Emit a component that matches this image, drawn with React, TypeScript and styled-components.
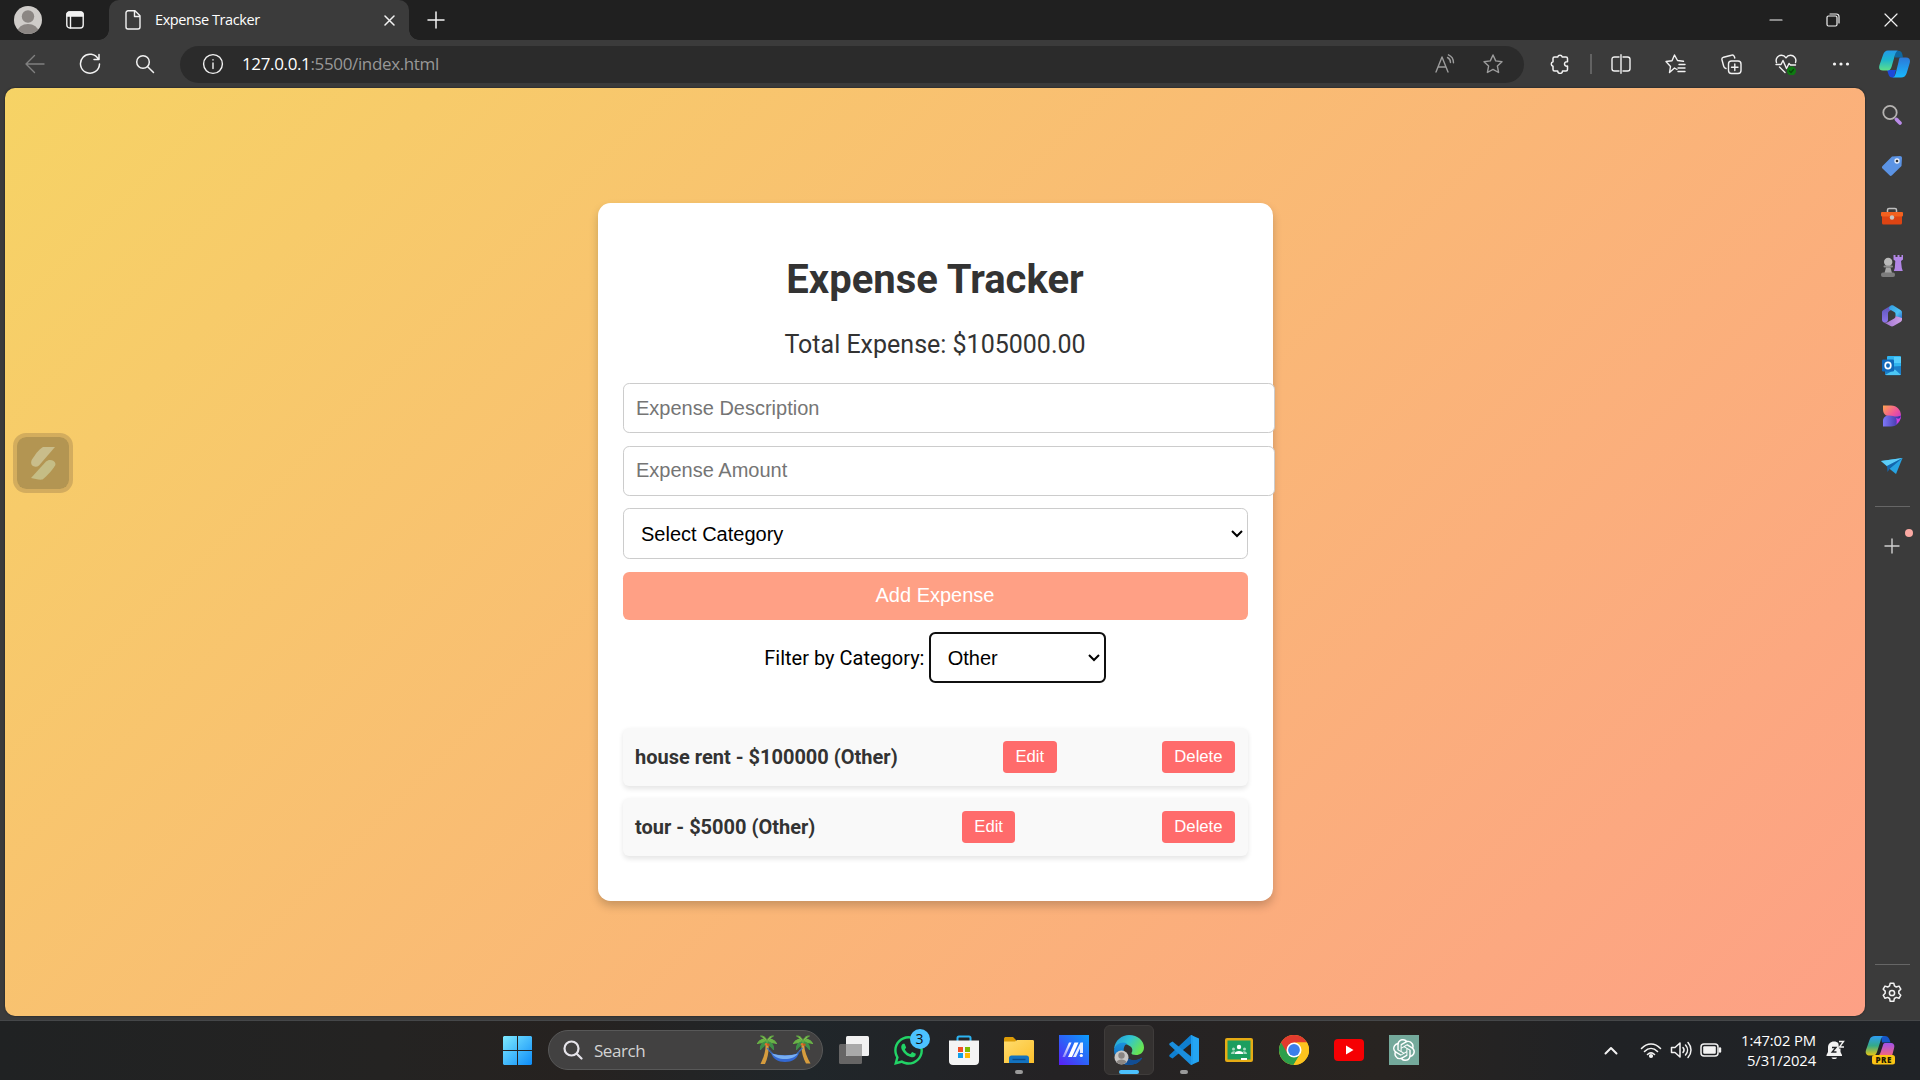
import React from "react";
import styled, { createGlobalStyle } from "styled-components";
import { SiOpenai } from "react-icons/si";
import { FaWhatsapp } from "react-icons/fa";

const uiFont = `"Segoe UI", "Open Sans", "Noto Sans", sans-serif`;

const GlobalStyle = createGlobalStyle`
  html, body { margin: 0; padding: 0; overflow: hidden; background: #3b3b3b; }
`;

/* ---------- Layout ---------- */

const Desktop = styled.div`
  width: 1920px;
  height: 1080px;
  display: flex;
  flex-direction: column;
  background: #3b3b3b;
  font-family: ${uiFont};
  overflow: hidden;
`;

const Slot = styled.div<{ $w?: number; $h?: number }>`
  flex: none;
  display: flex;
  align-items: center;
  justify-content: center;
  width: ${(p) => (p.$w ? `${p.$w}px` : "auto")};
  height: ${(p) => (p.$h ? `${p.$h}px` : "100%")};
  svg { display: block; }
`;

const Spacer = styled.div`
  flex: 1;
`;

/* ---------- Title bar ---------- */

const TitleBar = styled.header`
  flex: none;
  height: 40px;
  display: flex;
  background: #202020;
`;

const TitleLeft = styled.div`
  width: 109px;
  display: flex;
  padding-left: 5px;
  box-sizing: border-box;
`;

const WindowButtons = styled.div`
  display: flex;
  height: 39px;
  padding-right: 1px;
`;

const Tab = styled.div`
  position: relative;
  width: 300px;
  height: 40px;
  box-sizing: border-box;
  display: flex;
  align-items: center;
  padding: 0 10px 0 15px;
  border-radius: 10px 10px 0 0;
  background: #3b3b3b;
  &::before,
  &::after {
    content: "";
    position: absolute;
    bottom: 0;
    width: 10px;
    height: 10px;
  }
  &::before {
    left: -10px;
    background: radial-gradient(circle at 0 0, transparent 9.5px, #3b3b3b 10px);
  }
  &::after {
    right: -10px;
    background: radial-gradient(circle at 100% 0, transparent 9.5px, #3b3b3b 10px);
  }
`;

const TabTitle = styled.span`
  flex: 1;
  margin-left: 13px;
  font-size: 14.5px;
  letter-spacing: -0.42px;
  line-height: 20px;
  color: #fff;
`;

/* ---------- Toolbar ---------- */

const Toolbar = styled.div`
  flex: none;
  height: 48px;
  display: flex;
  align-items: center;
  padding-left: 7px;
`;

const AddressBar = styled.div`
  width: 1344px;
  height: 37px;
  margin: 0 18px 0 8px;
  display: flex;
  align-items: center;
  box-sizing: border-box;
  padding: 0 7px 0 12px;
  border-radius: 19px;
  background: #2b2b2b;
`;

const Url = styled.span`
  margin-left: 9px;
  padding-bottom: 2px;
  font-size: 17px;
  letter-spacing: -0.36px;
  color: #989898;
  b { font-weight: 400; color: #fff; }
`;

const ToolDivider = styled.div`
  width: 2px;
  height: 20px;
  margin: 0 1px 0 12px;
  background: #626262;
`;

/* ---------- Body ---------- */

const Body = styled.div`
  flex: none;
  height: 932px;
  display: flex;
  padding-left: 5px;
`;

const Viewport = styled.main`
  position: relative;
  width: 1860px;
  height: 928px;
  display: flex;
  align-items: center;
  justify-content: center;
  border-radius: 10px;
  background: linear-gradient(135deg, #f6d365 0%, #fda085 100%);
  box-shadow: 0 0 2px rgba(0, 0, 0, 0.6);
`;

const FloatingWidget = styled.div`
  position: absolute;
  left: 8px;
  top: 345px;
  width: 60px;
  height: 60px;
  box-sizing: border-box;
  border: 4px solid rgba(144, 116, 72, 0.35);
  border-radius: 13px;
  background: #b39552;
  background-clip: padding-box;
  display: flex;
  align-items: center;
  justify-content: center;
`;

const Card = styled.section`
  zoom: 1.25;
  width: 500px;
  padding: 20px;
  border-radius: 10px;
  background: #fff;
  box-shadow: 0 4px 8px rgba(0, 0, 0, 0.2);
  font-family: Roboto, sans-serif;
  font-size: 16px;
  text-align: center;
`;

const Heading = styled.h1`
  margin: 22.2px 0 21.2px;
  font-size: 32px;
  font-weight: 700;
  color: #333;
`;

const Total = styled.div`
  margin-bottom: 19.5px;
  font-size: 20px;
  color: #333;
`;

const Form = styled.form`
  display: flex;
  flex-direction: column;
  gap: 10px;
`;

const control = `
  box-sizing: content-box;
  margin: 0;
  padding: 10px;
  border: 1px solid #ccc;
  border-radius: 5px;
  background: #fff;
  font-family: "Liberation Sans", Arial, sans-serif;
  font-size: 16px;
`;

const Field = styled.input`
  ${control}
  width: 100%;
  &::placeholder { color: #757575; }
`;

const Select = styled.select<{ $focused?: boolean }>`
  ${control}
  box-sizing: border-box;
  height: 40.8px;
  color: #000;
  ${(p) => p.$focused && `width: 141px; border: 2px solid #101010; padding: 9px 8.6px 9px 9px;`}
`;

const AddButton = styled.button`
  padding: 10px;
  height: 38.4px;
  border: 0;
  border-radius: 5px;
  background: #ffa085;
  color: #fff;
  font-family: "Liberation Sans", Arial, sans-serif;
  font-size: 16px;
`;

const Filter = styled.div`
  display: flex;
  align-items: center;
  justify-content: center;
  gap: 4px;
  margin: 10px 0 20px;
`;

const List = styled.ul`
  list-style: none;
  margin: 36px 0 16px;
  padding: 0;
  display: flex;
  flex-direction: column;
  gap: 10px;
`;

const Item = styled.li`
  display: flex;
  align-items: center;
  justify-content: space-between;
  box-sizing: border-box;
  height: 46px;
  padding: 0 10px;
  border-radius: 5px;
  background: #f9f9f9;
  box-shadow: 0 2px 4px rgba(0, 0, 0, 0.1);
  font-weight: 700;
  color: #333;
`;

const ItemButton = styled.button`
  height: 25.6px;
  padding: 0 10px;
  border: 0;
  border-radius: 3px;
  background: #ff6b6b;
  color: #fff;
  font-family: "Liberation Sans", Arial, sans-serif;
  font-size: 13.333px;
`;

/* ---------- Sidebar ---------- */

const Sidebar = styled.aside`
  width: 54px;
  padding-right: 1px;
  display: flex;
  flex-direction: column;
  align-items: center;
`;

const SideLine = styled.div`
  width: 35px;
  height: 1px;
  background: #666;
`;

const AddSlot = styled.div`
  position: relative;
  width: 54px;
  height: 78px;
  display: flex;
  align-items: center;
  justify-content: center;
`;

const Dot = styled.span`
  position: absolute;
  left: 40px;
  top: 22px;
  width: 8px;
  height: 8px;
  border-radius: 50%;
  background: #fba9a3;
`;

/* ---------- Taskbar ---------- */

const Taskbar = styled.footer`
  flex: none;
  height: 60px;
  box-sizing: border-box;
  border-top: 1px solid #454749;
  display: flex;
  align-items: center;
  padding: 0 0 1px 490px;
  background: linear-gradient(90deg, #202223 0%, #242322 20%, #262220 30%, #20262a 42%, #242224 55%, #282421 72%, #202225 84%, #202327 100%);
`;

const SearchBox = styled.div`
  width: 275px;
  height: 40px;
  margin: 0 3px;
  box-sizing: border-box;
  display: flex;
  align-items: center;
  padding: 0 8px 0 14px;
  border: 1px solid #585858;
  border-radius: 20px;
  background: #424141;
  font-size: 17px;
  color: #d3d3d3;
  span { flex: 1; margin-left: 11px; letter-spacing: -0.45px; }
`;

const AppButton = styled.div<{ $active?: boolean }>`
  position: relative;
  flex: none;
  width: 50px;
  height: 50px;
  margin: 0 2.5px;
  box-sizing: border-box;
  display: flex;
  align-items: center;
  justify-content: center;
  border-radius: 6px;
  border: 1px solid ${(p) => (p.$active ? "#3f3c3b" : "transparent")};
  background: ${(p) => (p.$active ? "#343130" : "transparent")};
`;

const Indicator = styled.span<{ $active?: boolean }>`
  position: absolute;
  bottom: 0;
  left: 50%;
  transform: translateX(-50%);
  width: ${(p) => (p.$active ? 20 : 8)}px;
  height: 4px;
  border-radius: 2px;
  background: ${(p) => (p.$active ? "#4cc2ff" : "#9a9a9a")};
`;

const Badge = styled.span`
  position: absolute;
  left: 25px;
  top: 3px;
  width: 20px;
  height: 20px;
  border-radius: 50%;
  background: #4cc2ff;
  color: #111;
  font-size: 14px;
  line-height: 20px;
  text-align: center;
`;

const Clock = styled.div`
  width: 84px;
  margin-left: 6px;
  padding-bottom: 1px;
  text-align: right;
  font-size: 14.8px;
  letter-spacing: -0.12px;
  line-height: 20px;
  color: #fff;
  white-space: nowrap;
`;

/* ---------- Icons ---------- */

type LineProps = { w?: number; h?: number; color?: string; sw?: number; children: React.ReactNode };
const Line = ({ w = 20, h = w, color = "#f2f2f2", sw = 1.4, children }: LineProps) => (
  <svg width={w} height={h} viewBox={`0 0 ${w} ${h}`} fill="none" stroke={color} strokeWidth={sw} strokeLinecap="round" strokeLinejoin="round">
    {children}
  </svg>
);

const Avatar = () => (
  <svg width="28" height="28" viewBox="0 0 28 28">
    <clipPath id="av"><circle cx="14" cy="14" r="14" /></clipPath>
    <g clipPath="url(#av)">
      <rect width="28" height="28" fill="#cfccc9" />
      <circle cx="14" cy="10.5" r="6.2" fill="#8b8683" />
      <ellipse cx="14" cy="26" rx="10.5" ry="8" fill="#8b8683" />
    </g>
  </svg>
);

const star = "M10 1l2.700 5.900 6.300.8-4.600 4.400 1.200 6.400L10 15.400l-5.600 3.100 1.200-6.400L1 7.700l6.300-.8z";

const ToolCopilot = () => (
  <svg width="31" height="28" viewBox="0 0 31 28">
    <defs>
      <linearGradient id="cpa" x1="0" y1="0" x2="0" y2="1"><stop stopColor="#2498e8" /><stop offset=".45" stopColor="#1cb4cf" /><stop offset="1" stopColor="#5ee089" /></linearGradient>
      <linearGradient id="cpb" x1="0" y1="0" x2="0" y2="1"><stop stopColor="#2c78d8" /><stop offset="1" stopColor="#18b8fd" /></linearGradient>
    </defs>
    <path d="M15 1h5c2.500 0 3.200 2 4 6.500h-8z" fill="#0f679f" />
    <path d="M8 20h9l-2 7.500h-2c-3 0-3.400-3-5-7.500z" fill="#1d49d8" />
    <path d="M9 .5h11c-2.500 0-3.500 2-4.200 5L12.500 17c-.8 2.500-2 3.500-4 3.500H4c-3.500 0-4.500-2-3.500-5.500L4 5C5 2 6.500.5 9 .5z" fill="url(#cpa)" />
    <path d="M21.500 7.500H27c3.500 0 4.500 2 3.700 5.500l-3 10c-1 3-2.700 4.500-5.700 4.500h-9c2.200 0 3.100-2 3.800-4.500l2.700-11c.6-2.500.6-4.500 2-4.500z" fill="url(#cpb)" />
  </svg>
);

const TrayCopilot = () => (
  <svg width="32" height="32" viewBox="0 0 32 32">
    <defs>
      <linearGradient id="ta" x1="0" y1="0" x2="0" y2="1"><stop stopColor="#2e9df4" /><stop offset=".5" stopColor="#34a987" /><stop offset="1" stopColor="#e8c613" /></linearGradient>
      <linearGradient id="tb" x1="0" y1="0" x2="0" y2="1"><stop stopColor="#a052ea" /><stop offset="1" stopColor="#f7657b" /></linearGradient>
    </defs>
    <path d="M16 2h4c3.500 0 4.500 3 5.500 6.500H17z" fill="#1456c8" />
    <path d="M10 2h9c-2 0-3 2-3.500 5L12 18c-.8 2.500-2 3.500-4 3.500H5c-3.500 0-5-2-4-5.500L4.500 6C5.500 3 7 2 10 2z" fill="url(#ta)" />
    <path d="M20 9h5c4 0 5 2 4 5.500L27 22H12c2 0 3-2 3.700-4l2-6c.5-2 1-3 2.300-3z" fill="url(#tb)" />
    <rect x="7" y="21" width="23" height="9.500" rx="2.500" fill="#fcc414" />
    <text x="18.700" y="28.700" fontFamily="Open Sans, sans-serif" fontSize="8" fontWeight="800" textAnchor="middle" fill="#241a00" letterSpacing=".5">PRE</text>
  </svg>
);

const SideIcons = [
  <svg width="22" height="22" viewBox="0 0 22 22">
    <circle cx="9" cy="8.500" r="6.700" fill="none" stroke="#b5b3b1" strokeWidth="1.800" />
    <path d="M15.500 15.500l3.500 3.500" stroke="#b98be8" strokeWidth="3.800" strokeLinecap="round" />
  </svg>,
  <svg width="22" height="22" viewBox="0 0 22 22">
    <path d="M11 1.500l8-.5c1.200 0 2 .8 2 2l-.5 8L11 20.300c-.9.8-1.700.8-2.500 0L1.500 13.500c-.8-.8-.8-1.600 0-2.500z" fill="#5b93e4" />
    <circle cx="16" cy="6" r="2" fill="#333" stroke="#e8eefb" strokeWidth="1.300" />
  </svg>,
  <svg width="22" height="18" viewBox="0 0 22 18">
    <path d="M6.500 5V3c0-1 .5-1.500 1.500-1.500h6c1 0 1.500.5 1.500 1.500v2" fill="none" stroke="#bfbfbf" strokeWidth="1.500" />
    <rect x="1" y="8" width="20" height="9.500" rx="1.500" fill="#dd4413" />
    <rect x="0" y="5" width="22" height="4.500" rx="1" fill="#f2611f" />
    <circle cx="11" cy="10.500" r="2.200" fill="#c9c6c4" />
  </svg>,
  <svg width="22" height="24" viewBox="0 0 22 24">
    <path d="M12.500 1h2v2h2V1h2v2h2V1h1.500v4.500l-2 1.500.8 7 1 3h-9l1-3 .5-7-1.800-1.500z" fill="#b286e6" />
    <circle cx="7.200" cy="8" r="4.200" fill="#b9b9b9" />
    <rect x="2.500" y="11.500" width="9.500" height="2" rx="1" fill="#8d8d8d" />
    <path d="M5 13.500h4.500l1.500 5.500H3.500z" fill="#a6a6a6" />
    <rect x="0" y="18.500" width="14" height="4.500" rx="2" fill="#7c7c7c" />
  </svg>,
  <svg width="20" height="22" viewBox="0 0 20 22">
    <defs>
      <linearGradient id="m1" x1="0" y1="0" x2="0" y2="1"><stop stopColor="#5a54b8" /><stop offset="1" stopColor="#8d74ea" /></linearGradient>
      <linearGradient id="m2" x1="0" y1="0" x2="1" y2="1"><stop stopColor="#2f9ae0" /><stop offset=".6" stopColor="#4dc2f4" /><stop offset="1" stopColor="#2a63c4" /></linearGradient>
      <linearGradient id="m3" x1="0" y1="0" x2="1" y2="0"><stop stopColor="#9a6fd0" /><stop offset="1" stopColor="#cfa0e6" /></linearGradient>
    </defs>
    <path d="M9 .6L1.500 5C.6 5.500 0 6.300 0 7.300v7.500c0 1 .6 1.900 1.500 2.400 2 1.100 4.500-.2 4.500-2.400V8.500c0-1 .5-2 1.500-2.500L12 3z" fill="url(#m1)" />
    <path d="M9 .6c.8-.5 1.600-.5 2.400 0L18.500 5c.9.500 1.500 1.300 1.500 2.300v7.200l-6.500-3.500V9c0-1-.3-1.600-1.200-2.100L7 4C7 2.500 7.500 1.500 9 .6z" fill="url(#m2)" />
    <path d="M1.500 17.200c2 .8 3.500.3 5-.5l5.700-3.200c.9-.5 1.300-1.100 1.300-2.500L20 13v1.500c0 1-.6 1.900-1.500 2.400l-7 4.200c-.9.500-2.100.5-3 0z" fill="url(#m3)" />
  </svg>,
  <svg width="20" height="20" viewBox="0 0 20 20">
    <rect x="5" y="0" width="14" height="13" rx="1" fill="#2fb4f0" />
    <rect x="12" y="1" width="7" height="6" fill="#54cdfb" />
    <path d="M3 11l16-1v8c0 .8-.4 1.200-1.200 1.200H4.200C3.400 19.200 3 18.800 3 18z" fill="#1b7fc9" />
    <path d="M3 19l10-5.500 6 5.500z" fill="#4cc7f5" />
    <rect x="0" y="3.500" width="12" height="12" rx="1.200" fill="#1068b9" />
    <ellipse cx="6" cy="9.500" rx="2.800" ry="3.200" fill="none" stroke="#fff" strokeWidth="1.700" />
  </svg>,
  <svg width="20" height="22" viewBox="0 0 20 22">
    <defs>
      <linearGradient id="da" x1="0" y1="0" x2="1" y2="1"><stop stopColor="#ffa44f" /><stop offset=".5" stopColor="#f0559a" /><stop offset="1" stopColor="#a92fe0" /></linearGradient>
      <linearGradient id="db" x1="0" y1="0" x2="1" y2="0"><stop stopColor="#7d77f7" /><stop offset="1" stopColor="#3a2c9c" /></linearGradient>
    </defs>
    <path d="M1 .5h8c6 0 10 4.500 10 10 0 4-2 7-5 9V13L4 10.500C2 9 1 7 1 4.500z" fill="url(#da)" />
    <path d="M1 21.500V16c0-3.500 2.500-5.500 6-5.500 4.500 0 7 2.500 12 0-.5 6.500-4 11-10 11z" fill="url(#db)" />
    <path d="M19 10.500c-1 4-3 3.500-5 2.500 1 2.500 1 5 0 6.500 3-2 5-5 5-9z" fill="#cf3fe0" />
  </svg>,
  <svg width="22" height="18" viewBox="0 0 22 18">
    <path d="M0 4L21.500 1 15 17l-5-4z" fill="#27a3e2" />
    <path d="M0 4L21.500 1 6 9z" fill="#5dcdf8" />
    <path d="M6 9L21.500 1 9 11.500 6.500 15z" fill="#1466ac" />
  </svg>,
];

const fronds = [
  "M0 0C-3-3.500-7-2.500-9.500 2-6 .5-3 1 0 2z",
  "M0 0c-4 .5-7 3.500-6.500 8C-4.500 5-2 3.500 1 2z",
  "M0 0c3-3.500 7-2.500 9.500 2C6 .5 3 1 0 2z",
  "M0 0c4 .5 7 3.500 6.500 8C4.500 5 2 3.500-1 2z",
];

const PalmArt = () => (
  <svg width="58" height="32" viewBox="0 0 58 32">
    <path d="M9.500 9l3 .5c.5 7-.5 14-3.500 20.500H4.500C8 23 10 16 9.500 9zM48 9.500l-2.500 0c-.5 8 1.500 14 4.500 20h4.500c-3.500-6-6-12-6.500-20z" fill="#d69c3e" />
    <path d="M11 14c1.500 2 3 4 5 6M46.500 14c-1.500 2-3 4-5 6M11 14c3 2 5 5 7 7M46.500 14c-3 2-5 5-7 7" fill="none" stroke="#3a70c6" strokeWidth="1" />
    <path d="M15 19c8 3 20 3 28 0-2 6-7 9-14 9s-12-3-14-9z" fill="#3368d2" />
    <path d="M16 19.500c7 2.500 19 2.500 26 0-3 4-7 5.500-13 5.500s-11-2-13-5.500z" fill="#78aef0" />
    {[[11, 7.5], [47, 7.5]].map(([x, y]) => (
      <g key={x} transform={`translate(${x} ${y})`}>
        {fronds.map((d, i) => <path key={d} d={d} fill={i % 2 ? "#3f9148" : "#69b447"} stroke={i % 2 ? "#3f9148" : "#69b447"} strokeWidth="1.200" strokeLinejoin="round" />)}
        <path d="M0 1C0-3-3-6-6.500-5.500-4-4-2-2 0 1zM0 1C0-3 3-6 6.500-5.500 4-4 2-2 0 1z" fill="#8cc152" stroke="#5fa744" strokeWidth="1" />
        <circle cx="-.8" cy="2.800" r="1.400" fill="#e0732c" /><circle cx="1.400" cy="3.200" r="1.300" fill="#c9531f" />
      </g>
    ))}
  </svg>
);

const TaskView = () => (
  <svg width="30" height="28" viewBox="0 0 30 28">
    <rect x="0" y="8" width="23" height="20" rx="1.500" fill="#666565" />
    <rect x="7" y="0" width="23" height="20" rx="1.500" fill="#f1f1f1" />
    <path d="M7 8h16v12H8.500L7 18.500z" fill="#a9a9a9" />
  </svg>
);

const Store = () => (
  <svg width="30" height="30" viewBox="0 0 30 30">
    <path d="M8.500 7V3c0-1 .5-1.500 1.500-1.500h10c1 0 1.500.5 1.500 1.500v4" fill="none" stroke="#2cb4f2" strokeWidth="2" />
    <path d="M0 5.500h30V26c0 2.500-1.500 4-4 4H4c-2.500 0-4-1.500-4-4z" fill="#f4f4f4" />
    <path d="M9 12h5v5H9z" fill="#f04f25" /><path d="M16 12h5v5h-5z" fill="#7eba00" />
    <path d="M9 18h5v5H9z" fill="#109fe8" /><path d="M16 18h5v5h-5z" fill="#ffb902" />
  </svg>
);

const Folder = () => (
  <svg width="30" height="28" viewBox="0 0 30 28">
    <defs><linearGradient id="fo" x1="0" y1="0" x2="1" y2="1"><stop stopColor="#ffdc6e" /><stop offset="1" stopColor="#fcbf2b" /></linearGradient></defs>
    <path d="M0 3c0-1.500.8-2 2-2h7l3 3v4H0z" fill="#dc9b07" />
    <path d="M0 5.500h11l2-1.500h15.500c1 0 1.500.5 1.500 1.500V27H0z" fill="url(#fo)" />
    <path d="M5 27v-5c0-1.500 1-2.500 2.500-2.500h15c1.500 0 2.500 1 2.500 2.500v5z" fill="#1373c0" />
    <path d="M8.500 23.500h13" stroke="#0a4a8a" strokeWidth="1.400" />
  </svg>
);

const StudioApp = () => (
  <svg width="30" height="30" viewBox="0 0 30 30">
    <defs>
      <linearGradient id="st" x1="0" y1="1" x2="1" y2="0"><stop stopColor="#5a1ef5" /><stop offset=".5" stopColor="#2c63f8" /><stop offset="1" stopColor="#0b9dfc" /></linearGradient>
      <linearGradient id="sl" x1="0" y1="1" x2="0" y2="0"><stop stopColor="#8d8bfa" /><stop offset="1" stopColor="#fff" /></linearGradient>
    </defs>
    <rect width="30" height="30" fill="url(#st)" />
    <path d="M10 7.500h2.500L6 22H3.500z" fill="url(#sl)" />
    <path d="M15.500 7.500h4L13 22H9z" fill="#fff" />
    <path d="M21.500 7.500H24V18h-3v-4.500L17 22h-3z" fill="#e6edff" />
    <circle cx="22.300" cy="20.500" r="1.600" fill="#fff" />
  </svg>
);

const Edge = () => (
  <svg width="30" height="30" viewBox="0 0 30 30">
    <defs>
      <linearGradient id="e1" x1="0" y1="0" x2="1" y2=".5"><stop stopColor="#2394d8" /><stop offset=".5" stopColor="#30c4d3" /><stop offset="1" stopColor="#67e453" /></linearGradient>
      <linearGradient id="e2" x1="0" y1="0" x2="0" y2="1"><stop stopColor="#1b93dd" /><stop offset="1" stopColor="#0d5cb2" /></linearGradient>
    </defs>
    <path d="M0 14C1 5 8 0 15 0c9 0 15 6 15 12.500 0 5-4 7.500-8 7.500-3 0-5-1-4.500-2 1.500-2 1-5-1-6.500C11 7 3 9 0 14z" fill="url(#e1)" />
    <path d="M0 15c1-6 8-9 13-6.500C9 11 9 16 11 20c3 6 10 7 17 3-3 5-8 7-13 7C6 30 0 23 0 15z" fill="url(#e2)" />
    <path d="M11 20c3 6 10 6.500 16 3 1-.5 1.500 0 .8.8C25 28 20 30 15 30c-3 0-5-5-4-10z" fill="#124d93" />
    <circle cx="7.500" cy="22.500" r="7" fill="#c9c7c5" />
    <circle cx="7.500" cy="20.500" r="3.200" fill="#8b8683" />
    <path d="M2.500 27c1-3.500 9-3.500 10 0-2.500 3-7.500 3-10 0z" fill="#8b8683" />
  </svg>
);

const Code = () => (
  <svg width="30" height="30" viewBox="0 0 30 30">
    <path d="M22 0l8 3.500v23L22 30z" fill="#24a5f2" />
    <path d="M22 8.500L3.500 23.500 1 22c-1-.8-1-1.700 0-2.500L21 .8 22 0z" fill="#0f7fd0" />
    <path d="M22 21.500L3.500 6.500 1 8c-1 .8-1 1.700 0 2.500l20 18.700 1 .8z" fill="#1a8edd" />
    <path d="M22 0l2 .9v28.200L22 30z" fill="#1f9cec" />
  </svg>
);

const Classroom = () => (
  <svg width="28" height="24" viewBox="0 0 28 24">
    <rect width="28" height="24" rx="2" fill="#e6ab14" />
    <rect x="2.500" y="2.500" width="23" height="19" fill="#1c9e5f" />
    <circle cx="14" cy="9" r="2.200" fill="#fff" /><circle cx="8.500" cy="11" r="1.500" fill="#a5dabf" /><circle cx="19.500" cy="11" r="1.500" fill="#a5dabf" />
    <path d="M9.500 16c0-4 9-4 9 0z" fill="#fff" /><path d="M6 16c0-2 2-3 4-2.500L9 16zM22 16c0-2-2-3-4-2.500l1 2.500z" fill="#a5dabf" />
    <path d="M16 20h6v2h-6z" fill="#fff" />
  </svg>
);

const Chrome = () => (
  <svg width="30" height="30" viewBox="0 0 30 30">
    <circle cx="15" cy="15" r="15" fill="#fcc31e" />
    <path d="M15 15L2 7.500A15 15 0 0 0 14.500 30l7-11.500z" fill="#2c9f4b" />
    <path d="M2 7.500A15 15 0 0 1 28 7.500H15L8.500 18.500z" fill="#e23b2e" />
    <path d="M28 7.500A15 15 0 0 1 14.500 30l7-11.500L18 7.500z" fill="#fcc31e" />
    <circle cx="15" cy="15" r="7.500" fill="#fff" /><circle cx="15" cy="15" r="5.900" fill="#3b7eea" />
  </svg>
);

const apps = [
  { icon: <TaskView /> },
  { icon: <FaWhatsapp size={33} color="#22d366" />, badge: "3" },
  { icon: <Store /> },
  { icon: <Folder />, open: true },
  { icon: <StudioApp /> },
  { icon: <Edge />, active: true },
  { icon: <Code />, open: true },
  { icon: <Classroom /> },
  { icon: <Chrome /> },
  { icon: <svg width="30" height="22" viewBox="0 0 30 22"><rect width="30" height="22" rx="4" fill="#f60003" /><path d="M12 6.500l7.500 4.500-7.500 4.500z" fill="#fff" /></svg> },
  { icon: <svg width="30" height="30"><rect width="30" height="30" fill="#74a99b" /><SiOpenai x="4" y="4" size={22} color="#fff" /></svg> },
];

const expenses = [
  { id: 1, name: "house rent", amount: 100000, category: "Other" },
  { id: 2, name: "tour", amount: 5000, category: "Other" },
];

const total = expenses.reduce((sum, e) => sum + e.amount, 0);

/* ---------- Sections ---------- */

const BrowserTitle = () => (
  <TitleBar>
    <TitleLeft>
      <Slot $w={46}><Avatar /></Slot>
      <Slot $w={48}>
        <Line w={18} sw={1.4}>
          <rect x=".8" y="1" width="16.400" height="16" rx="3" />
          <path d="M1 3.500C1 2 2 1 3.500 1h11C16 1 17 2 17 3.500V5H1z" fill="#f2f2f2" />
          <path d="M4.500 5v12" />
        </Line>
      </Slot>
    </TitleLeft>
    <Tab>
      <Line w={18} h={20}>
        <path d="M4 .8h7l5 5V17a2 2 0 0 1-2 2H4a2 2 0 0 1-2-2V2.800a2 2 0 0 1 2-2zM10.500 1v5.500h5.500" />
      </Line>
      <TabTitle>Expense Tracker</TabTitle>
      <Slot $w={20}><Line w={11} sw={1.5}><path d="M1 1l9 9M10 1l-9 9" /></Line></Slot>
    </Tab>
    <Slot $w={53}><Line w={18} sw={1.5}><path d="M1 9h16M9 1v16" /></Line></Slot>
    <Spacer />
    <WindowButtons>
      <Slot $w={56}><Line w={14} sw={1.2}><path d="M1 7h12" /></Line></Slot>
      <Slot $w={58}>
        <Line w={14} sw={1.2}><rect x="1" y="3" width="10" height="10" rx="1.500" /><path d="M4 1h6.500A2.500 2.500 0 0 1 13 3.500V10" /></Line>
      </Slot>
      <Slot $w={57}><Line w={14} sw={1.2}><path d="M1 1l12 12M13 1L1 13" /></Line></Slot>
    </WindowButtons>
  </TitleBar>
);

const BrowserToolbar = () => (
  <Toolbar>
    <Slot $w={55}><Line color="#808080"><path d="M19 10H1M9.500 1.500L1 10l8.500 8.500" /></Line></Slot>
    <Slot $w={55}><Line w={22} sw={1.5}><path d="M19.500 6.500A9.500 9.500 0 1 0 20.500 11M20 1.500v5h-5" /></Line></Slot>
    <Slot $w={55}><Line w={20} sw={1.5}><circle cx="8" cy="8" r="6.300" /><path d="M12.700 12.700L18.500 18.500" /></Line></Slot>
    <AddressBar>
      <Slot $w={41}><Line w={22}><circle cx="11" cy="11" r="9.400" /><path d="M11 10v5.500M11 6.800v.2" /></Line></Slot>
      <Url><b>127.0.0.1</b>:5500/index.html</Url>
      <Spacer />
      <Slot $w={49}>
        <Line color="#9c9c9c"><path d="M1 18L7 3l6 15M3.500 13h7M12.500 3.500c2 1 3 2.800 3 5M13.500 .8c3.500 1.500 5 4.500 5 8" /></Line>
      </Slot>
      <Slot $w={48}><Line color="#9c9c9c"><path d={star} /></Line></Slot>
    </AddressBar>
    <Slot $w={36}>
      <Line w={20} sw={1.5}>
        <path d="M4.500 3h3.200a2.400 2.400 0 0 1 4.600 0H16c1 0 1.500.6 1.500 1.500v3.200c-4-.6-4 5 0 4.400v3.400c0 1-.6 1.500-1.500 1.500h-3.500a2.400 2.400 0 0 1-4.800 0H4.500C3.500 17 3 16.400 3 15.500v-3.200a2.400 2.400 0 0 1 0-4.600V4.500C3 3.500 3.600 3 4.500 3z" />
      </Line>
    </Slot>
    <ToolDivider />
    <Slot $w={55}>
      <Line><path d="M8 3H3.500C2 3 1 3.800 1 5.200v9.600C1 16.200 2 17 3.500 17H8M12 3h4.500C18 3 19 3.800 19 5.200v9.600c0 1.400-1 2.200-2.500 2.200H12M10 .8v18.400" /></Line>
    </Slot>
    <Slot $w={55}>
      <Line w={21} h={20}>
        <path d="M12 15.500L9.500 14 4.500 18.500l1-6L1 7.500l6-.8L9.500 1l3 5.500 6 .8M14 10.500h6M13 14h7M13 17.500h7" />
      </Line>
    </Slot>
    <Slot $w={56}>
      <Line w={21}>
        <rect x="7.500" y="7" width="12.500" height="12.500" rx="3" /><path d="M13.800 10v6.500M10.500 13.200h6.500" /><path d="M5 14.500c-1.500-.4-2-1.200-2.300-2.300L1 6c-.4-1.400.3-2.400 1.600-2.800l7.800-2c1.400-.4 2.500.3 3 1.600l.4 1.200" />
      </Line>
    </Slot>
    <Slot $w={54}>
      <Line w={22} h={21}>
        <path d="M1.500 8.500C0 4 3.500 1.300 6.500 1.300c2 0 3.500 1 4.500 2.500 1-1.500 2.500-2.500 4.500-2.500 3 0 6.500 2.700 5 7.200M1 10.500h5l2-4 3.500 8 2.500-5 1.500 1.500h5M4.500 13l5.500 5.500" />
        <circle cx="16.500" cy="17" r="4.500" fill="#0f7a12" stroke="none" /><path d="M14.500 17l1.500 1.500 2.500-3" stroke="#07480a" />
      </Line>
    </Slot>
    <Slot $w={55}><svg width="18" height="4" fill="#f2f2f2"><circle cx="2.500" cy="2" r="1.600" /><circle cx="9" cy="2" r="1.600" /><circle cx="15.500" cy="2" r="1.600" /></svg></Slot>
    <Slot $w={52}><ToolCopilot /></Slot>
  </Toolbar>
);

const Tracker = () => (
  <Card>
    <Heading>Expense Tracker</Heading>
    <Total>Total Expense: ${total.toFixed(2)}</Total>
    <Form onSubmit={(e) => e.preventDefault()}>
      <Field placeholder="Expense Description" />
      <Field placeholder="Expense Amount" />
      <Select defaultValue=""><option value="">Select Category</option></Select>
      <AddButton>Add Expense</AddButton>
    </Form>
    <Filter>
      <label htmlFor="filter">Filter by Category:</label>
      <Select id="filter" $focused defaultValue="Other"><option>Other</option></Select>
    </Filter>
    <List>
      {expenses.map((e) => (
        <Item key={e.id}>
          <span>{`${e.name} - $${e.amount} (${e.category})`}</span>
          <ItemButton>Edit</ItemButton>
          <ItemButton>Delete</ItemButton>
        </Item>
      ))}
    </List>
  </Card>
);

const EdgeSidebar = () => (
  <Sidebar>
    {SideIcons.map((icon, i) => <Slot key={i} $w={54} $h={i === 0 ? 53 : 50}>{icon}</Slot>)}
    <Slot $h={15} />
    <SideLine />
    <AddSlot><Line w={16} color="#d0d0d0"><path d="M1 8h14M8 1v14" /></Line><Dot /></AddSlot>
    <Spacer />
    <SideLine />
    <Slot $w={54} $h={55}>
      <Line w={22} sw={1.5}>
        <path d="M9.200 1.200h3.600l.6 2.700 1.900 1.100 2.700-.9 1.800 3.100-2 1.900v2.200l2 1.900-1.800 3.100-2.700-.9-1.900 1.100-.6 2.800H9.200l-.6-2.800-1.900-1.100-2.700.9-1.800-3.100 2-1.900V9.100l-2-1.900L4 4.100l2.700.9 1.900-1.100z" />
        <circle cx="11" cy="11" r="2.600" />
      </Line>
    </Slot>
  </Sidebar>
);

const WindowsTaskbar = () => (
  <Taskbar>
    <Slot $w={55}>
      <svg width="29" height="29" viewBox="0 0 29 29">
        <defs><linearGradient id="win" x1="0" y1="0" x2="29" y2="29" gradientUnits="userSpaceOnUse"><stop stopColor="#7eeaff" /><stop offset="1" stopColor="#0d8cf8" /></linearGradient></defs>
        <path d="M1 0h13v14H0V1zM15 0h13l1 1v13H15zM0 15h14v14H1l-1-1zM15 15h14v13l-1 1H15z" fill="url(#win)" />
      </svg>
    </Slot>
    <SearchBox>
      <Line w={20} sw={2.2} color="#e6e4ea"><circle cx="8.500" cy="8.500" r="7" /><path d="M13.700 13.700L18.500 18.500" /></Line>
      <span>Search</span>
      <PalmArt />
    </SearchBox>
    {apps.map((a, i) => (
      <AppButton key={i} $active={a.active}>
        {a.icon}
        {a.badge && <Badge>{a.badge}</Badge>}
        {(a.open || a.active) && <Indicator $active={a.active} />}
      </AppButton>
    ))}
    <Spacer />
    <Slot $w={50}><Line w={14} h={9} sw={2}><path d="M1.500 7.500L7 2l5.500 5.500" /></Line></Slot>
    <Slot $w={30}>
      <Line w={22} h={17} sw={1.6}><path d="M1.500 6.500c5.500-6 13.500-6 19 0M4.500 9.500c4-4 9-4 13 0M7.500 12.500c2.200-2 4.800-2 7 0" /><circle cx="11" cy="14" r="1.300" fill="#f2f2f2" /></Line>
    </Slot>
    <Slot $w={30}>
      <Line w={22} h={18} sw={1.5}><path d="M1.500 6.500v5H5l5 4.500V2L5 6.500zM13 6.500c1.300 1.500 1.300 3.500 0 5M15.500 4c2.700 3 2.700 7 0 10M18 1.500c4 4.500 4 10.500 0 15" /></Line>
    </Slot>
    <Slot $w={30}>
      <Line w={22} h={14} sw={1.5}><rect x="1" y="1" width="17" height="12" rx="3" /><rect x="3.200" y="3.200" width="12.600" height="7.600" rx="1" fill="#f2f2f2" stroke="none" /><path d="M20 5.500v3" strokeWidth="2.400" /></Line>
    </Slot>
    <Clock>1:47:02 PM<br />5/31/2024</Clock>
    <Slot $w={40}>
      <svg width="20" height="20" viewBox="0 0 20 20">
        <path d="M8 1.500c-3.500 0-6 2.500-6 6v4.500L.5 15v1h15.500v-1l-1.500-3V7.500c0-3.500-3-6-6.500-6z" fill="#f2f2f2" />
        <path d="M5.500 17.500h5.500c-.5 2-5 2-5.500 0z" fill="#f2f2f2" />
        <path d="M12 0h7v8.500h-6z" fill="#202326" />
        <path d="M13 1.500h4.500L13.500 7H18" fill="none" stroke="#f2f2f2" strokeWidth="1.400" />
        <path d="M6 7.500h4L6.200 12H10.500" fill="none" stroke="#202326" strokeWidth="1.400" />
      </svg>
    </Slot>
    <Slot $w={50}><TrayCopilot /></Slot>
    <Slot $w={14} />
  </Taskbar>
);

export default function App() {
  return (
    <Desktop>
      <GlobalStyle />
      <BrowserTitle />
      <BrowserToolbar />
      <Body>
        <Viewport>
          <FloatingWidget>
            <svg width="26" height="34" viewBox="0 0 26 34">
              <path d="M13 1h12L9 19.500c-2 1.500-4 1.500-6 .5-2-1-2.500-4-1-6.500C5 9 9 3 13 1z" fill="#c9bd8b" />
              <path d="M1 32l15-16.500c3-3 9-1.500 9.500 2.500 0 3-9.500 13-13 15.500-3 .5-8-.5-11.500-1.500z" fill="#c5bd85" />
            </svg>
          </FloatingWidget>
          <Tracker />
        </Viewport>
        <EdgeSidebar />
      </Body>
      <WindowsTaskbar />
    </Desktop>
  );
}
